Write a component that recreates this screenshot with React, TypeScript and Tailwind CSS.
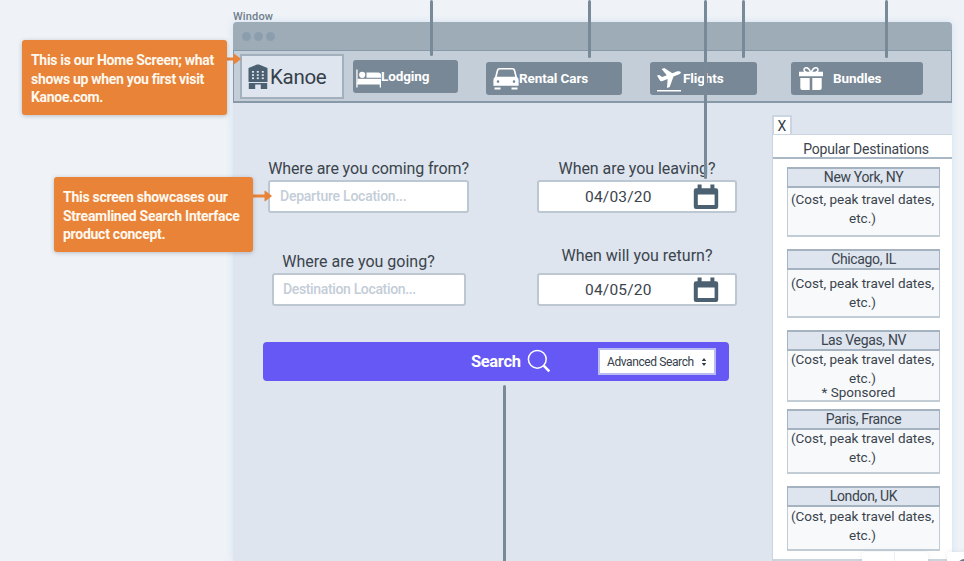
import React from "react";

const Building = () => (
  <svg className="h-[26px] w-5 shrink-0" viewBox="0 0 20 26" fill="#4b6070">
    <path d="M0.5 4 L9 0.5 H11 L19.5 4 V18 H0.5 Z" />
    <path d="M0.8 19 H19.2 V25 H12.8 V20.5 H7.2 V25 H0.8 Z" />
    <g fill="#dee5ee">
      {[7, 10.2, 13.4].map((y) =>
        [4, 8.8, 13.8].map((x) => <rect key={`${x}-${y}`} x={x} y={y} width="2" height="1.7" />)
      )}
    </g>
  </svg>
);

const Bed = () => (
  <svg className="mt-1 h-5 w-[26px] shrink-0" viewBox="0 0 26 20" fill="white">
    <path d="M0.3 0.5 H1.6 V13 H25 V18.5 H23.7 V15.5 H1.6 V18.5 H0.3 Z" />
    <circle cx="6.2" cy="5.8" r="3.1" />
    <path d="M10.5 3.5 H22 C24 3.5 25 4.5 25 6 V8.8 H10.5 Z" />
    <path d="M1.5 9.8 H25 V14 H1.5 Z" />
  </svg>
);

const Car = () => (
  <svg className="h-6 w-[26px] shrink-0" viewBox="0 0 26 24" fill="white">
    <path
      fillRule="evenodd"
      d="M6.5 1 H19.5 Q21.7 1 22.3 3.2 L24 10 Q25.6 11 25.6 13.3 V18.8 H0.4 V13.3 Q0.4 11 2 10 L3.7 3.2 Q4.3 1 6.5 1 Z M6.8 2.6 Q5.6 2.6 5.2 4 L3.8 9.7 H22.2 L20.8 4 Q20.4 2.6 19.2 2.6 Z M5 13.3 A1.3 1.3 0 1 0 5 15.9 A1.3 1.3 0 1 0 5 13.3 Z M21 13.3 A1.3 1.3 0 1 0 21 15.9 A1.3 1.3 0 1 0 21 13.3 Z"
    />
    <path d="M1.5 20.4 H7.5 V22.6 H1.5 Z M18.5 20.4 H24.5 V22.6 H18.5 Z" />
  </svg>
);

const Plane = () => (
  <svg className="h-[26px] w-[26px] shrink-0" viewBox="0 0 26 26" fill="white">
    <path d="M1 9.5 L3.2 9 L6.2 11.1 L10.8 9.2 L5.6 3 L8.3 2 L16.3 7.2 L21.3 5.3 Q24.2 4.7 25 6.4 Q24.5 7.7 22.6 8.5 L17.5 10.6 L13.7 21 L11 22 L11.6 13 L5.9 15.2 Q4.4 15.5 3.6 14 Z" />
    <path d="M1 24 H25 V25.5 H1 Z" />
  </svg>
);

const Gift = () => (
  <svg className="h-[25px] w-[26px] shrink-0" viewBox="0 0 26 25" fill="white">
    <path d="M1 5.8 H25 V10.3 H1 Z M2.3 12 H11.7 V24 H4.3 Q2.3 24 2.3 22 Z M14.3 12 H23.7 V22 Q23.7 24 21.7 24 H14.3 Z" />
    <path
      d="M12.5 6 C10.8 1 6 0.6 6 3.6 C6 5 7 6 8.4 6 M13.5 6 C15.2 1 20 0.6 20 3.6 C20 5 19 6 17.6 6"
      fill="none"
      stroke="white"
      strokeWidth="1.5"
    />
  </svg>
);

const Calendar = () => (
  <svg className="h-[26px] w-[26px] shrink-0" viewBox="0 0 26 26" fill="#4b6070">
    <path
      fillRule="evenodd"
      d="M4.6 0.5 H8.6 V4.3 H17.4 V0.5 H21.4 V4.3 H23 Q25.2 4.3 25.2 6.5 V22.8 Q25.2 25 23 25 H3 Q0.8 25 0.8 22.8 V6.5 Q0.8 4.3 3 4.3 H4.6 Z M4.8 10.5 V21 H21.6 V10.5 Z"
    />
  </svg>
);

const Magnifier = () => (
  <svg className="-mt-0.5 h-6 w-6 shrink-0" viewBox="0 0 24 24" fill="none" stroke="white">
    <circle cx="10.3" cy="10.3" r="8.9" strokeWidth="1.5" />
    <path d="M16.7 16.7 L22.3 22.3" strokeWidth="2.6" />
  </svg>
);

const navButton =
  "flex items-center rounded-[3px] bg-[#788896] font-bold text-white text-[13.5px] leading-4 whitespace-nowrap tracking-[-0.1px]";
const field = "flex items-center rounded-[3px] border-2 border-[#bcc7d2] bg-white";
const placeholder = "text-[14px] font-medium text-[#c3cdd8]";
const label = "text-center text-[16px] leading-5 text-[#3b444d] whitespace-nowrap";

function DateField({ value }: { value: string }) {
  return (
    <div className={`${field} h-[33px] w-[200px] justify-between pr-4 pl-[46px]`}>
      <span className="mt-0.5 text-[15.5px] tracking-[0.2px] text-[#3b444d]">{value}</span>
      <Calendar />
    </div>
  );
}

const destinations = [
  { city: "New York, NY", card: "h-[70px] mb-3", body: "pt-[2px]" },
  { city: "Chicago, IL", card: "h-[69px] mb-3", body: "pt-[4px]" },
  { city: "Las Vegas, NV", card: "h-[72px] mb-[7px]", body: "-mt-px", sponsored: true },
  { city: "Paris, France", card: "h-[65px] mb-3", body: "-mt-px" },
  { city: "London, UK", card: "h-[65px]", body: "" },
];

function Note({ className, lines }: { className: string; lines: string[] }) {
  return (
    <div
      className={`absolute rounded-[3px] bg-[#e88338] px-[9px] text-[14px] font-bold leading-[18.6px] whitespace-nowrap text-[#fff8ef] shadow-[0_1px_4px_rgba(80,90,110,0.35)] ${className}`}
    >
      {lines.map((line) => (
        <div key={line}>{line}</div>
      ))}
    </div>
  );
}

const Arrow = ({ className }: { className: string }) => (
  <svg className={`absolute h-3 ${className}`} viewBox="0 0 20 12" preserveAspectRatio="xMaxYMid slice">
    <path d="M0 6 H15" stroke="#e88338" strokeWidth="3" />
    <path d="M12.5 1 Q12.5 0.4 13.2 0.7 L19.5 5.4 Q20 6 19.5 6.6 L13.2 11.3 Q12.5 11.6 12.5 11 Z" fill="#e88338" />
  </svg>
);

const connectors = [
  "left-[430px] top-0 h-[56px]",
  "left-[588px] top-0 h-[58px]",
  "left-[704px] top-0 h-[179px]",
  "left-[742px] top-0 h-[58px]",
  "left-[885px] top-0 h-[58px]",
  "left-[503px] top-[385px] h-[180px]",
];

export default function App() {
  return (
    <div className="relative h-[561px] w-[964px] overflow-hidden bg-[#eff3f7] pl-[233px] font-['Roboto','Liberation_Sans',sans-serif]">
      <div className="flex h-[22px] items-end text-[11px] font-medium leading-[11px] tracking-[0.15px] text-[#6f7e8c]">
        Window
      </div>
      <main className="flex h-[539px] w-[719px] flex-col rounded-t-[4px] bg-[#dee5ee] shadow-[0_0_7px_rgba(200,215,240,0.7)]">
        <div className="flex h-[28px] shrink-0 items-center gap-[3px] rounded-t-[4px] bg-[#9eacb8] pl-[9px]">
          {[0, 1, 2].map((i) => (
            <i key={i} className="size-[9px] rounded-full bg-[#8c9eae]" />
          ))}
        </div>
        <nav className="flex h-[53px] shrink-0 items-start border border-b-2 border-[#8799a8] bg-[#c3ced8] pl-1.5">
          <div className="mt-[3px] flex h-[45px] w-[104px] items-center border-2 border-[#a2b0bd] bg-[#dee5ee] pl-1.5">
            <Building />
            <span className="ml-[2px] mt-0.5 text-[20.5px] tracking-[-0.3px] text-[#35404a]">Kanoe</span>
          </div>
          <button className={`${navButton} ml-[9px] mt-[9px] h-[33px] w-[105px] pl-[3px]`}>
            <Bed />
            <span className="-ml-px -mt-0.5">Lodging</span>
          </button>
          <button className={`${navButton} ml-7 mt-[11px] h-[33px] w-[136px] pl-[7px]`}>
            <Car />
            <span className="-mt-0.5">Rental Cars</span>
          </button>
          <button className={`${navButton} ml-7 mt-[11px] h-[33px] w-[107px] pl-[6px]`}>
            <Plane />
            <span className="-mt-0.5 ml-[1px]">Flights</span>
          </button>
          <button className={`${navButton} ml-[34px] mt-[11px] h-[33px] w-[132px] pl-[7px]`}>
            <Gift />
            <span className="-mt-0.5 ml-[9px]">Bundles</span>
          </button>
        </nav>
        <div className="flex min-h-0 flex-1">
          <section className="w-[540px] shrink-0 pl-[30px]">
            <div className="flex h-[239px] gap-[68px] pl-[5px] pt-[56px]">
              <div className="flex w-[201px] flex-col">
                <div className={`${label} tracking-[-0.12px]`}>Where are you coming from?</div>
                <div className={`${field} ${placeholder} mt-px h-[33px] w-[201px] pl-[10px] tracking-[-0.25px]`}>
                  Departure Location...
                </div>
                <div className={`${label} mt-[39px] pr-5`}>Where are you going?</div>
                <div className={`${field} ${placeholder} ml-[4px] mt-px h-[33px] w-[194px] pl-[9px] tracking-[-0.35px]`}>
                  Destination Location...
                </div>
              </div>
              <div className="flex w-[200px] flex-col">
                <div className={`${label} tracking-[-0.05px]`}>When are you leaving?</div>
                <div className="mt-px">
                  <DateField value="04/03/20" />
                </div>
                <div className={`${label} mt-[33px]`}>When will you return?</div>
                <div className="mt-[7px]">
                  <DateField value="04/05/20" />
                </div>
              </div>
            </div>
            <div className="flex h-[39px] w-[466px] items-center rounded-[4px] bg-[#6558f5] pl-[208px] text-white">
              <span className="mt-0.5 w-[56px] text-[16.5px] font-bold tracking-[-0.35px] whitespace-nowrap">Search</span>
              <Magnifier />
              <div className="ml-[47px] flex h-[27px] w-[118px] items-center border-2 border-[#b9bdf2] bg-white pl-[7px] text-[12px] text-[#35404a]">
                <span className="w-[94px] tracking-[-0.4px] whitespace-nowrap">Advanced Search</span>
                <svg className="h-2 w-1.5 shrink-0" viewBox="0 0 6 8" fill="#35404a">
                  <path d="M3 0 L5.3 3 H0.7 Z M3 8 L0.7 5 H5.3 Z" />
                </svg>
              </div>
            </div>
          </section>
          <aside className="flex w-[179px] flex-col pt-3">
            <button className="-ml-px h-[19px] w-5 shrink-0 border-2 border-b-0 border-[#cbd5df] bg-white text-[14px] leading-[14px] text-[#35404a]">
              X
            </button>
            <div className="-ml-px h-[427px] shrink-0 border-b-2 border-l border-t border-[#cbd5df] bg-white text-center text-[#3b444d]">
              <h2 className="mb-2 h-6 border-b-2 border-[#a9b8c4] pl-[7px] pt-[4px] text-[14px] leading-5 font-normal tracking-[-0.2px]">
                Popular Destinations
              </h2>
              {destinations.map((d) => (
                <article
                  key={d.city}
                  className={`ml-[14px] w-[153px] border border-b-2 border-t-0 border-[#c2ccd5] bg-[#f7f9fb] ${d.card}`}
                >
                  <h3 className="-mx-px h-[21px] border border-b-2 border-t-2 border-[#a5b3c0] bg-[#dee5ee] text-[14px] leading-[17px] font-normal tracking-[-0.35px]">
                    {d.city}
                  </h3>
                  <div className={`-ml-[3px] -mr-px text-[13.5px] leading-[19px] whitespace-nowrap ${d.body}`}>
                    (Cost, peak travel dates,
                    <br />
                    etc.)
                  </div>
                  {d.sponsored && (
                    <div className="pr-[10px] text-[13.5px] leading-[9px]">* Sponsored</div>
                  )}
                </article>
              ))}
            </div>
          </aside>
        </div>
      </main>

      {connectors.map((c) => (
        <i key={c} className={`absolute w-[3px] rounded-full bg-[#788a98] ${c}`} />
      ))}
      <Arrow className="left-[226px] top-[53px] w-[15px]" />
      <Arrow className="left-[252px] top-[190px] w-[20px]" />
      <Note
        className="left-[22px] top-10 h-[75px] w-[205px] pt-[11px] tracking-[-0.31px]"
        lines={["This is our Home Screen; what", "shows up when you first visit", "Kanoe.com."]}
      />
      <Note
        className="left-[54px] top-[177px] h-[75px] w-[199px] pt-[11px] tracking-[-0.26px]"
        lines={["This screen showcases our", "Streamlined Search Interface", "product concept."]}
      />
      <div className="absolute left-[862px] top-[552px] flex h-4 w-[66px] rounded-[3px] bg-white shadow-[0_0_5px_rgba(120,130,150,0.15)]">
        <i className="w-[33px] border-r border-[#eceff3]" />
      </div>
      <div className="absolute left-[947px] top-[552px] h-4 w-8 rounded-[3px] bg-white pl-[11px] pt-[7px] shadow-[0_0_5px_rgba(120,130,150,0.15)]">
        <i className="block size-3 rounded-full border-2 border-[#69798a]" />
      </div>
    </div>
  );
}
